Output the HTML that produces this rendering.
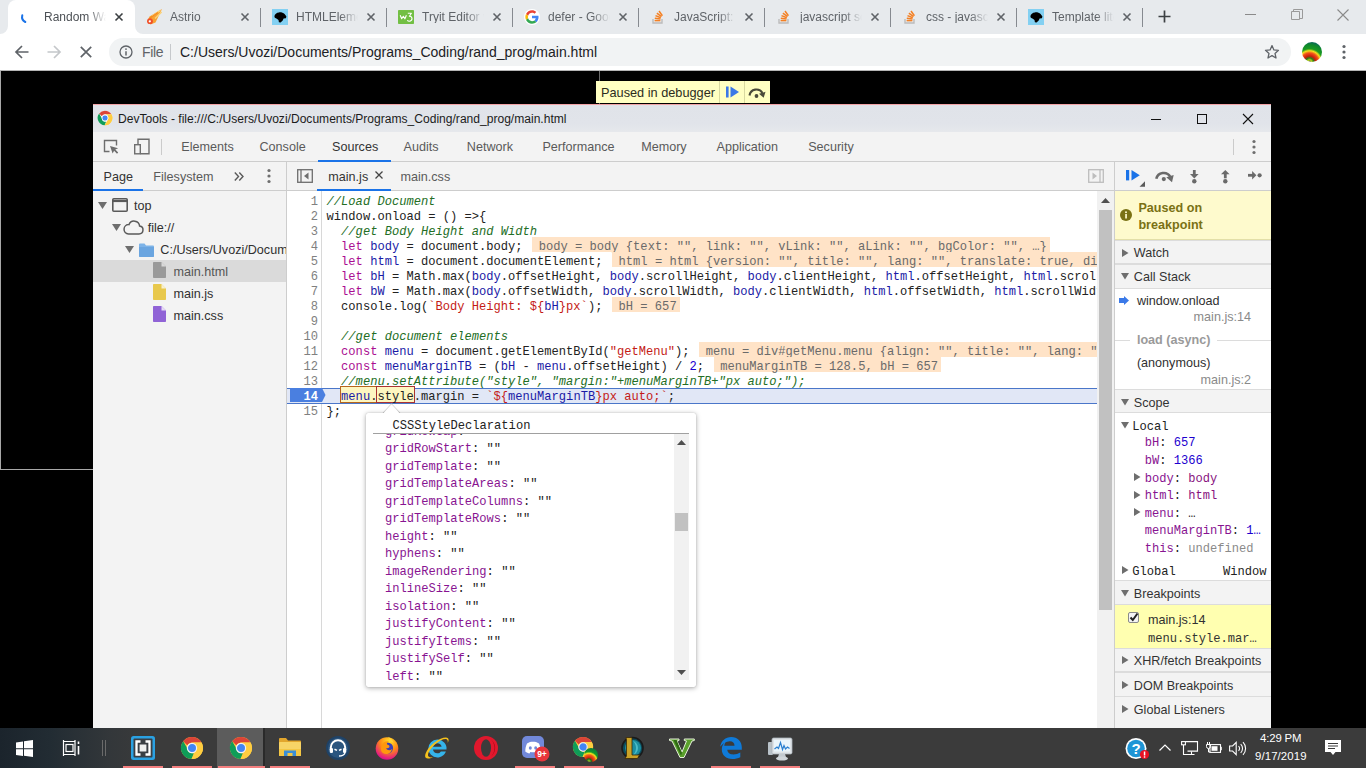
<!DOCTYPE html>
<html>
<head>
<meta charset="utf-8">
<title>Random</title>
<style>
*{box-sizing:border-box;margin:0;padding:0}
html,body{width:1366px;height:768px;overflow:hidden;background:#000}
body{position:relative;font-family:"Liberation Sans",sans-serif;font-size:13px;color:#333}
.abs{position:absolute}
.t{position:absolute;white-space:nowrap;line-height:1}
.mono{font-family:"Liberation Mono",monospace}
svg{position:absolute;overflow:visible}
/* ---------- chrome browser ---------- */
#tabstrip{left:0;top:0;width:1366px;height:34px;background:#e7eaed}
#acttab{left:8px;top:0;width:127px;height:34px;background:#fff;border-radius:8px 8px 0 0}
#toolbar{left:0;top:34px;width:1366px;height:36px;background:#fff}
#tbline{left:0;top:70px;width:1366px;height:1px;background:#b4b4b4}
#omni{left:109px;top:38px;width:1182px;height:28px;border-radius:14px;background:#f1f3f4}
.tabt{font-size:12px;color:#5f6368;top:10.500px;width:64px;overflow:hidden;-webkit-mask-image:linear-gradient(90deg,#000 0,#000 44px,transparent 62px);mask-image:linear-gradient(90deg,#000 0,#000 44px,transparent 62px)}
.tsep{position:absolute;top:8px;width:1px;height:19px;background:#868a90}
/* ---------- page ---------- */
#pagebox{left:0;top:71px;width:600px;height:399px;border:1px solid #a8a8a8;border-top:none;border-right-color:#6a6a6a;background:#000}
/* ---------- devtools ---------- */
#dt{left:93px;top:104px;width:1178px;height:624px;background:#fff;overflow:hidden}
#dttitle{left:0;top:0;width:1178px;height:28px;background:linear-gradient(#e0e3e9 0,#e1e4ea 70%,#e6e8ec 100%);border-top:1px solid #f2a3a7}
#dttabs{left:0;top:28px;width:1178px;height:30px;background:#f3f3f3;border-bottom:1px solid #cdcdcd}
#dtsub{left:0;top:58px;width:1178px;height:29px;background:#f3f3f3;border-bottom:1px solid #cdcdcd}
.dtab{font-size:12.6px;color:#5a5a5a;top:37px}
.tree{font-size:12.6px;color:#303030}
.ln{left:0;width:31px;text-align:right;font-size:12.1px;line-height:15px;color:#808080}
.lnb{color:#fff;font-weight:bold}
.cl{left:39.600px;font-size:12.1px;line-height:15px;color:#222;white-space:pre}
.cl .k{color:#aa0d91}.cl .d{color:#1a1aa6}.cl .v{color:#1a1aa6}.cl .s{color:#c41a16}.cl .c{color:#236e25;font-style:italic}.cl .n{color:#1c00cf}
.cl .a{color:#6a6a6a;background:#ffe3c7;margin-left:9.5px;padding:0 3px 0 6.700px;display:inline-block;height:15px;line-height:20px;vertical-align:top;position:relative;top:-2.500px}
.cl .hl1{background:#fdf6c0;box-shadow:0 0 0 1px #b5651d;display:inline-block;height:15px;line-height:20px;vertical-align:top;position:relative;top:-2.500px}
.cl .hl2{box-shadow:0 0 0 1px #a33;display:inline-block;height:15px;line-height:20px;vertical-align:top}
.pr{left:12px;font-size:12.1px;line-height:15px;color:#222;white-space:pre}
.pn{color:#881391}.pv{color:#222}
.sbb{font-size:12.6px;font-weight:bold;color:#7a7114;line-height:13px}
.sbh{font-size:12.6px;color:#333;line-height:13px}
.sbt{font-size:12.6px;color:#303030;line-height:13px}
.sc{font-size:12.1px;line-height:15px;color:#222;white-space:pre}
.sc .n{color:#1c00cf}.sc .tg{color:#881280}
/* ---------- taskbar ---------- */
#taskbar{left:0;top:728px;width:1366px;height:40px;background:linear-gradient(90deg,#1b242c 0,#222c33 50px,#33373a 110px,#3b3b3b 150px,#3b3b3b 100%)}
</style>
</head>
<body>
<!-- ======= CHROME TAB STRIP ======= -->
<div id="tabstrip" class="abs"></div>
<div id="acttab" class="abs"></div>
<svg style="left:0;top:26px" width="8" height="8"><path d="M0 8h8V0a8 8 0 0 1-8 8z" fill="#fff"/></svg>
<svg style="left:135px;top:26px" width="8" height="8"><path d="M8 8H0V0a8 8 0 0 0 8 8z" fill="#fff"/></svg>
<svg style="left:20px;top:9px" width="16" height="16" viewBox="0 0 16 16"><path d="M2.300 6.200A6 6 0 0 0 5.300 13" fill="none" stroke="#1a73e8" stroke-width="2" stroke-linecap="round"/></svg>
<div class="t tabt" style="left:44px;color:#4d5156">Random Wa</div>
<svg style="left:115px;top:13px" width="8" height="8" viewBox="0 0 8 8"><path d="M0.500 0.500l7 7M7.500 0.500l-7 7" stroke="#3c4043" stroke-width="1.600" fill="none"/></svg>
<svg style="left:145px;top:8px" width="18" height="18" viewBox="0 0 18 18"><path d="M17 1L4.500 8.500 2 13.500l3.500 3 5-2z" fill="#f7a233"/><path d="M15.500 2.300L7 8.200M16.600 4L10 10.500" stroke="#fbd277" stroke-width="1.400"/><path d="M13 4.500L5 10" stroke="#f58a1f" stroke-width="1.200"/><circle cx="5" cy="13.200" r="2.900" fill="#f0502a"/><circle cx="4.800" cy="13.300" r="1.150" fill="#fff"/></svg>
<div class="t tabt" style="left:170px;color:#5f6368">Astrio</div>
<svg style="left:241px;top:13px" width="8" height="8" viewBox="0 0 8 8"><path d="M0.500 0.500l7 7M7.500 0.500l-7 7" stroke="#5f6368" stroke-width="1.600" fill="none"/></svg>
<div class="tsep" style="left:260px"></div>
<svg style="left:272px;top:9px" width="16" height="16" viewBox="0 0 16 16"><rect width="16" height="16" fill="#83d0f2"/><path d="M2.400 7.200C2.800 5 4.600 3.600 7 3.400c2.200-.2 4.200.4 5.600 1.700l1.800 2.300-.5 1.800-2.300.4-.9 2-2.100 1.900-1.700-.3-.4-2.100-2.100-1.500-1.600-.9z" fill="#000"/></svg>
<div class="t tabt" style="left:296px;color:#5f6368">HTMLElemen</div>
<svg style="left:367px;top:13px" width="8" height="8" viewBox="0 0 8 8"><path d="M0.500 0.500l7 7M7.500 0.500l-7 7" stroke="#5f6368" stroke-width="1.600" fill="none"/></svg>
<div class="tsep" style="left:386px"></div>
<svg style="left:398px;top:10px" width="16" height="14" viewBox="0 0 16 14"><rect width="16" height="14" rx="0.800" fill="#72bf44"/><path d="M2.200 5.300l1.500 3.500 1.600-2.500 1.600 2.500 1.500-3.500" fill="none" stroke="#fff" stroke-width="1.100" stroke-linejoin="round"/><path d="M9.800 3.200h3.600l-2 3c1.600 0 2.600.9 2.600 2.400 0 1.600-1.100 2.600-2.600 2.600-1 0-1.700-.4-2.100-1" fill="none" stroke="#fff" stroke-width="1.100" stroke-linejoin="round"/></svg>
<div class="t tabt" style="left:422px;color:#5f6368">Tryit Editor v</div>
<svg style="left:493px;top:13px" width="8" height="8" viewBox="0 0 8 8"><path d="M0.500 0.500l7 7M7.500 0.500l-7 7" stroke="#5f6368" stroke-width="1.600" fill="none"/></svg>
<div class="tsep" style="left:512px"></div>
<svg style="left:524px;top:9px" width="16" height="16" viewBox="0 0 48 48"><circle cx="24" cy="24" r="24" fill="#fff"/><path fill="#EA4335" d="M24 11.5c3.5 0 5.9 1.5 7.300 2.800l5.400-5.300C33.400 5.900 29.100 4 24 4 16.200 4 9.400 8.500 6.100 15l6.300 4.900C14 15 18.600 11.500 24 11.500z"/><path fill="#4285F4" d="M43.600 24.500c0-1.600-.1-2.800-.4-4H24v7.500h11.100c-.2 1.900-1.400 4.700-4.100 6.600l6.200 4.800c3.700-3.400 6.400-8.500 6.400-14.900z"/><path fill="#FBBC05" d="M12.400 28.100c-.4-1.300-.7-2.600-.7-4.100s.3-2.800.7-4.100L6.100 15C4.800 17.700 4 20.800 4 24s.8 6.300 2.100 9l6.300-4.900z"/><path fill="#34A853" d="M24 44c5.400 0 9.900-1.800 13.200-4.800L31 34.400c-1.700 1.200-3.900 2-7 2-5.400 0-10-3.500-11.600-8.400L6.100 33C9.400 39.500 16.200 44 24 44z"/></svg>
<div class="t tabt" style="left:548px;color:#5f6368">defer - Goog</div>
<svg style="left:619px;top:13px" width="8" height="8" viewBox="0 0 8 8"><path d="M0.500 0.500l7 7M7.500 0.500l-7 7" stroke="#5f6368" stroke-width="1.600" fill="none"/></svg>
<div class="tsep" style="left:638px"></div>
<svg style="left:650px;top:9px" width="16" height="16" viewBox="0 0 16 16"><path d="M3 10v4h9v-4" fill="none" stroke="#bcbbbb" stroke-width="1.4"/><g stroke="#f48024" stroke-width="1.5" fill="none"><path d="M4.6 11.6h5.8"/><path d="M4.8 9.2l5.7.9"/><path d="M5.5 6.6l5.3 2.2"/><path d="M6.9 4.1l4.6 3.6"/><path d="M9 2l3.4 4.7"/></g></svg>
<div class="t tabt" style="left:674px;color:#5f6368">JavaScript: s</div>
<svg style="left:745px;top:13px" width="8" height="8" viewBox="0 0 8 8"><path d="M0.500 0.500l7 7M7.500 0.500l-7 7" stroke="#5f6368" stroke-width="1.600" fill="none"/></svg>
<div class="tsep" style="left:764px"></div>
<svg style="left:776px;top:9px" width="16" height="16" viewBox="0 0 16 16"><path d="M3 10v4h9v-4" fill="none" stroke="#bcbbbb" stroke-width="1.4"/><g stroke="#f48024" stroke-width="1.5" fill="none"><path d="M4.6 11.6h5.8"/><path d="M4.8 9.2l5.7.9"/><path d="M5.5 6.6l5.3 2.2"/><path d="M6.9 4.1l4.6 3.6"/><path d="M9 2l3.4 4.7"/></g></svg>
<div class="t tabt" style="left:800px;color:#5f6368">javascript sc</div>
<svg style="left:871px;top:13px" width="8" height="8" viewBox="0 0 8 8"><path d="M0.500 0.500l7 7M7.500 0.500l-7 7" stroke="#5f6368" stroke-width="1.600" fill="none"/></svg>
<div class="tsep" style="left:890px"></div>
<svg style="left:902px;top:9px" width="16" height="16" viewBox="0 0 16 16"><path d="M3 10v4h9v-4" fill="none" stroke="#bcbbbb" stroke-width="1.4"/><g stroke="#f48024" stroke-width="1.5" fill="none"><path d="M4.6 11.6h5.8"/><path d="M4.8 9.2l5.7.9"/><path d="M5.5 6.6l5.3 2.2"/><path d="M6.9 4.1l4.6 3.6"/><path d="M9 2l3.4 4.7"/></g></svg>
<div class="t tabt" style="left:926px;color:#5f6368">css - javascr</div>
<svg style="left:997px;top:13px" width="8" height="8" viewBox="0 0 8 8"><path d="M0.500 0.500l7 7M7.500 0.500l-7 7" stroke="#5f6368" stroke-width="1.600" fill="none"/></svg>
<div class="tsep" style="left:1016px"></div>
<svg style="left:1028px;top:9px" width="16" height="16" viewBox="0 0 16 16"><rect width="16" height="16" fill="#83d0f2"/><path d="M2.400 7.200C2.800 5 4.600 3.600 7 3.400c2.200-.2 4.200.4 5.600 1.700l1.800 2.300-.5 1.800-2.300.4-.9 2-2.100 1.900-1.700-.3-.4-2.100-2.100-1.500-1.600-.9z" fill="#000"/></svg>
<div class="t tabt" style="left:1052px;color:#5f6368">Template lite</div>
<svg style="left:1123px;top:13px" width="8" height="8" viewBox="0 0 8 8"><path d="M0.500 0.500l7 7M7.500 0.500l-7 7" stroke="#5f6368" stroke-width="1.600" fill="none"/></svg>
<div class="tsep" style="left:1142px"></div>
<svg style="left:1158px;top:10px" width="13" height="13" viewBox="0 0 13 13"><path d="M6.500 0.500v12M0.500 6.500h12" stroke="#3c4043" stroke-width="1.700" fill="none"/></svg>
<div class="abs" style="left:1245px;top:14px;width:11px;height:1px;background:#8a8a8a"></div>
<svg style="left:1291px;top:9px" width="12" height="12" viewBox="0 0 12 12"><path d="M0.500 2.500h8v8h-8zM2.500 2.500v-2h9v9h-3" stroke="#9a9a9a" stroke-width="1" fill="none"/></svg>
<svg style="left:1337px;top:9px" width="12" height="12" viewBox="0 0 12 12"><path d="M0.500 0.500l11 11M11.500 0.500l-11 11" stroke="#8a8a8a" stroke-width="1.100" fill="none"/></svg>
<!-- ======= CHROME TOOLBAR ======= -->
<div id="toolbar" class="abs"></div>
<div id="tbline" class="abs"></div>
<div id="omni" class="abs"></div>
<svg style="left:15px;top:45px" width="14" height="14" viewBox="0 0 14 14"><path d="M13.500 7H1.500M7 1L1 7l6 6" stroke="#5f6368" stroke-width="1.700" fill="none"/></svg>
<svg style="left:47px;top:45px" width="14" height="14" viewBox="0 0 14 14"><path d="M0.500 7h12M7 1l6 6-6 6" stroke="#c4c7ca" stroke-width="1.700" fill="none"/></svg>
<svg style="left:80px;top:46px" width="12" height="12" viewBox="0 0 12 12"><path d="M0.800 0.800l10.400 10.400M11.200 0.800L0.800 11.200" stroke="#5f6368" stroke-width="1.700" fill="none"/></svg>
<svg style="left:119px;top:45px" width="14" height="14" viewBox="0 0 14 14"><circle cx="7" cy="7" r="6" fill="none" stroke="#5f6368" stroke-width="1.300"/><path d="M7 6.200v4.200" stroke="#5f6368" stroke-width="1.500"/><circle cx="7" cy="4.100" r="0.900" fill="#5f6368"/></svg>
<div class="t" style="left:142px;top:45px;font-size:14px;color:#5f6368;letter-spacing:-0.3px">File</div>
<div class="abs" style="left:170px;top:44px;width:1px;height:16px;background:#c6c9cc"></div>
<div class="t" style="left:180px;top:45px;font-size:14px;color:#202124">C:/Users/Uvozi/Documents/Programs_Coding/rand_prog/main.html</div>
<svg style="left:1264px;top:44px" width="16" height="16" viewBox="0 0 16 16"><path d="M8 1.600l1.900 4.300 4.600.4-3.500 3.100 1 4.600L8 11.600 4 14l1-4.600L1.500 6.300l4.600-.4z" fill="none" stroke="#5f6368" stroke-width="1.300" stroke-linejoin="round"/></svg>
<svg style="left:1302px;top:42px" width="20" height="20" viewBox="0 0 20 20"><defs><radialGradient id="tdg" cx="38%" cy="100%" r="100%"><stop offset="0" stop-color="#2a2208"/><stop offset=".1" stop-color="#b8d820"/><stop offset=".2" stop-color="#2d7a1a"/><stop offset=".3" stop-color="#c8200c"/><stop offset=".45" stop-color="#f2501a"/><stop offset=".56" stop-color="#f3e11e"/><stop offset=".66" stop-color="#1a9a22"/><stop offset=".85" stop-color="#0f8a2a"/><stop offset="1" stop-color="#0a6a5a"/></radialGradient></defs><circle cx="10" cy="10" r="10" fill="url(#tdg)"/></svg>
<svg style="left:1342px;top:44px" width="4" height="16" viewBox="0 0 4 16"><circle cx="2" cy="2.500" r="1.600" fill="#5f6368"/><circle cx="2" cy="8" r="1.600" fill="#5f6368"/><circle cx="2" cy="13.500" r="1.600" fill="#5f6368"/></svg>
<!-- ======= PAGE ======= -->
<div id="pagebox" class="abs"></div>
<!-- paused in debugger overlay -->
<div class="abs" style="left:596px;top:81px;width:174px;height:22px;background:#ffffc2"></div>
<div class="t" style="left:601px;top:87px;font-size:12.74px;color:#2b2b1c">Paused in debugger</div>
<div class="abs" style="left:719px;top:81px;width:1px;height:22px;background:#d9d9a0"></div>
<div class="abs" style="left:744px;top:81px;width:1px;height:22px;background:#d9d9a0"></div>
<svg style="left:726px;top:86px" width="13" height="12" viewBox="0 0 13 12"><rect x="0" y="0.500" width="2.600" height="11" fill="#3b78e7"/><path d="M4.500 0.500l8.500 5.500-8.500 5.500z" fill="#3b78e7"/></svg>
<svg style="left:748px;top:87px" width="18" height="11" viewBox="0 0 18 11"><path d="M1.500 8.500A7 7 0 0 1 14.500 6" fill="none" stroke="#4a4a3a" stroke-width="2.100"/><path d="M11 6.800l6.500-2-1.800 6z" fill="#4a4a3a"/><circle cx="8.500" cy="9" r="1.900" fill="#4a4a3a"/></svg>
<!-- ======= DEVTOOLS WINDOW (coords relative to 93,104) ======= -->
<div id="dt" class="abs">
  <div id="dttitle" class="abs"></div>
  <!-- chrome logo -->
  <svg style="left:4px;top:6px" width="16" height="16" viewBox="0 0 48 48"><circle cx="24" cy="24" r="22" fill="#fff"/><path d="M24 2a22 22 0 0 1 19.050 11H24a11 11 0 0 0-9.530 5.500L6.400 10.600A22 22 0 0 1 24 2z" fill="#db4437"/><path d="M43.050 13A22 22 0 0 1 23 45.980l9.530-16.480A11 11 0 0 0 33.530 18.500L43.050 13z" fill="#ffcd40" transform="rotate(0 24 24)"/><path d="M6.400 10.600l8.070 13.900h0A11 11 0 0 0 24 35a11 11 0 0 0 3.500-.570L23 45.980A22 22 0 0 1 6.400 10.600z" fill="#0f9d58"/><path d="M43.050 13H24a11 11 0 0 1 9.530 16.500L23 45.980A22 22 0 0 0 43.050 13z" fill="#ffcd40"/><circle cx="24" cy="24" r="9" fill="#4285f4" stroke="#fff" stroke-width="2.200"/></svg>
  <div class="t" style="left:25px;top:9px;font-size:12.07px;color:#1b1b1b">DevTools - file:///C:/Users/Uvozi/Documents/Programs_Coding/rand_prog/main.html</div>
  <!-- window buttons -->
  <div class="abs" style="left:1058px;top:15px;width:10px;height:1px;background:#111"></div>
  <div class="abs" style="left:1104px;top:10px;width:10px;height:10px;border:1px solid #111"></div>
  <svg style="left:1150px;top:10px" width="10" height="10" viewBox="0 0 10 10"><path d="M0 0l10 10M10 0L0 10" stroke="#111" stroke-width="1.100" fill="none"/></svg>

  <div id="dttabs" class="abs"></div>
  <!-- inspect icon -->
  <svg style="left:10px;top:35px" width="16" height="16" viewBox="0 0 16 16"><path d="M6.500 12.500h-5v-11h12v5" fill="none" stroke="#6e6e6e" stroke-width="1.400"/><path d="M7 7l2.600 7.600 1.500-2.800 2.900 2.900 1.200-1.200-2.900-2.900 2.800-1.300z" fill="#6e6e6e"/></svg>
  <!-- device icon -->
  <svg style="left:40px;top:34px" width="17" height="17" viewBox="0 0 17 17"><path d="M5 6V1.200h11v14.600H7.500" fill="none" stroke="#6e6e6e" stroke-width="1.400"/><rect x="1.700" y="6.700" width="5.600" height="9.100" fill="none" stroke="#6e6e6e" stroke-width="1.400"/></svg>
  <div class="abs" style="left:68px;top:35px;width:1px;height:16px;background:#cbcbcb"></div>
  <div class="t dtab" style="left:88.300px">Elements</div>
  <div class="t dtab" style="left:166.500px">Console</div>
  <div class="t dtab" style="left:239px;color:#333">Sources</div>
  <div class="t dtab" style="left:310.600px">Audits</div>
  <div class="t dtab" style="left:373.800px">Network</div>
  <div class="t dtab" style="left:449.400px">Performance</div>
  <div class="t dtab" style="left:548.200px">Memory</div>
  <div class="t dtab" style="left:623.500px">Application</div>
  <div class="t dtab" style="left:715.200px">Security</div>
  <div class="abs" style="left:225px;top:56px;width:73px;height:2px;background:#1a73e8"></div>
  <div class="abs" style="left:1140px;top:35px;width:1px;height:16px;background:#cbcbcb"></div>
  <svg style="left:1159px;top:34.500px" width="4" height="16" viewBox="0 0 4 16"><circle cx="2" cy="2.500" r="1.600" fill="#6e6e6e"/><circle cx="2" cy="8" r="1.600" fill="#6e6e6e"/><circle cx="2" cy="13.500" r="1.600" fill="#6e6e6e"/></svg>

  <div id="dtsub" class="abs"></div>
  <!-- left navigator header -->
  <div class="t dtab" style="left:10.600px;top:67px;color:#333">Page</div>
  <div class="t dtab" style="left:60.300px;top:67px">Filesystem</div>
  <svg style="left:141px;top:68px" width="10" height="9" viewBox="0 0 10 9"><path d="M0.800 0.500l3.700 4-3.700 4M5.300 0.500l3.700 4-3.700 4" fill="none" stroke="#5a5a5a" stroke-width="1.400"/></svg>
  <svg style="left:173.600px;top:64px" width="4" height="16" viewBox="0 0 4 16"><circle cx="2" cy="2.500" r="1.600" fill="#6e6e6e"/><circle cx="2" cy="8" r="1.600" fill="#6e6e6e"/><circle cx="2" cy="13.500" r="1.600" fill="#6e6e6e"/></svg>
  <div class="abs" style="left:0;top:85px;width:50px;height:2px;background:#1a73e8"></div>
  <div class="abs" style="left:193px;top:58px;width:1px;height:566px;background:#cdcdcd"></div>
  <!-- editor tabs -->
  <svg style="left:204px;top:65px" width="16" height="14" viewBox="0 0 16 14"><rect x="0.700" y="0.700" width="14.600" height="12.600" fill="none" stroke="#6e6e6e" stroke-width="1.300"/><path d="M4 0.700v12.600" stroke="#6e6e6e" stroke-width="1.300"/><path d="M11.500 3.500v7L7 7z" fill="#6e6e6e"/></svg>
  <div class="t dtab" style="left:235.300px;top:67px;color:#333">main.js</div>
  <svg style="left:282px;top:67px" width="8" height="8" viewBox="0 0 8 8"><path d="M0.500 0.500l7 7M7.500 0.500l-7 7" stroke="#444" stroke-width="1.300" fill="none"/></svg>
  <div class="t dtab" style="left:307.500px;top:67px">main.css</div>
  <div class="abs" style="left:224px;top:85px;width:74px;height:2px;background:#1a73e8"></div>
  <svg style="left:995px;top:65px" width="16" height="14" viewBox="0 0 16 14"><rect x="0.700" y="0.700" width="14.600" height="12.600" fill="none" stroke="#bdbdbd" stroke-width="1.300"/><path d="M12 0.700v12.600" stroke="#bdbdbd" stroke-width="1.300"/><path d="M4.500 3.500v7L9 7z" fill="#bdbdbd"/></svg>
  <!-- ======= file tree (left pane) ======= -->
  <div class="abs" style="left:0;top:87px;width:193px;height:537px;background:#f3f3f3"></div>
  <div class="abs" style="left:0;top:156px;width:193px;height:22px;background:#dadada"></div>
  <!-- top -->
  <svg style="left:5px;top:98px" width="9" height="7" viewBox="0 0 9 7"><path d="M0 0h9L4.500 7z" fill="#6e6e6e"/></svg>
  <svg style="left:19px;top:94px" width="16" height="14" viewBox="0 0 16 14"><rect x="0.800" y="0.800" width="14.400" height="12.400" rx="1" fill="none" stroke="#5a5a5a" stroke-width="1.600"/><path d="M0.800 3h14.400" stroke="#5a5a5a" stroke-width="2.200"/></svg>
  <div class="t tree" style="left:40.900px;top:96px">top</div>
  <!-- file:// -->
  <svg style="left:18.500px;top:120px" width="9" height="7" viewBox="0 0 9 7"><path d="M0 0h9L4.500 7z" fill="#6e6e6e"/></svg>
  <svg style="left:30px;top:116px" width="21" height="15" viewBox="0 0 21 15"><path d="M5.500 14h10.500a4 4 0 0 0 .6-7.950A5.500 5.500 0 0 0 6 4.600 4.700 4.700 0 0 0 5.500 14z" fill="none" stroke="#5a5a5a" stroke-width="1.500"/></svg>
  <div class="t tree" style="left:54.700px;top:118px">file://</div>
  <!-- folder -->
  <svg style="left:31.500px;top:142px" width="9" height="7" viewBox="0 0 9 7"><path d="M0 0h9L4.500 7z" fill="#6e6e6e"/></svg>
  <svg style="left:46px;top:139px" width="15" height="14" viewBox="0 0 15 14"><path d="M0 1.500a1 1 0 0 1 1-1h4.500l1.500 2h7a1 1 0 0 1 1 1V13a1 1 0 0 1-1 1H1a1 1 0 0 1-1-1z" fill="#7db3e8"/><path d="M0 4h15v9a1 1 0 0 1-1 1H1a1 1 0 0 1-1-1z" fill="#6aa5e0"/></svg>
  <div class="t tree" style="left:67.300px;top:140px;width:126px;overflow:hidden">C:/Users/Uvozi/Documents/Programs_Coding</div>
  <!-- files -->
  <svg style="left:60px;top:158px" width="13" height="16" viewBox="0 0 13 16"><path d="M0 0.800A.8.800 0 0 1 .8 0h7.700L13 4.500v10.700a.8.800 0 0 1-.8.800H.8a.8.800 0 0 1-.8-.8z" fill="#9a9a9a"/><path d="M8.500 0v4.500H13z" fill="#dadada"/></svg>
  <div class="t tree" style="left:80.500px;top:162px;color:#555">main.html</div>
  <svg style="left:60px;top:180px" width="13" height="16" viewBox="0 0 13 16"><path d="M0 0.800A.8.800 0 0 1 .8 0h7.700L13 4.500v10.700a.8.800 0 0 1-.8.800H.8a.8.800 0 0 1-.8-.8z" fill="#e8c84c"/><path d="M8.500 0v4.500H13z" fill="#f7f0d0"/></svg>
  <div class="t tree" style="left:80.500px;top:184px">main.js</div>
  <svg style="left:60px;top:202px" width="13" height="16" viewBox="0 0 13 16"><path d="M0 0.800A.8.800 0 0 1 .8 0h7.700L13 4.500v10.700a.8.800 0 0 1-.8.800H.8a.8.800 0 0 1-.8-.8z" fill="#9063d6"/><path d="M8.500 0v4.500H13z" fill="#e6dcf6"/></svg>
  <div class="t tree" style="left:80.500px;top:206px">main.css</div>
  <!-- ======= code editor ======= -->
  <div class="abs" style="left:194px;top:87px;width:810px;height:537px;background:#fff;overflow:hidden">
    <div class="abs" style="left:0;top:0;width:35px;height:537px;background:#fff;border-right:1px solid #d8d8d8"></div>
    <div class="abs" style="left:0;top:196.500px;width:810px;height:16px;background:#e1e7f6;border-top:1px solid #4a76c9;border-bottom:1px solid #4a76c9"></div>
    <div class="abs" style="left:3px;top:197px;width:32px;height:14px;background:#4a7fe0"></div>
    <svg style="left:35px;top:197px" width="4" height="14" viewBox="0 0 4 14"><path d="M0 0l3.500 7L0 14z" fill="#4a7fe0"/></svg>
    <div class="t mono ln" style="top:3.5px">1</div>
    <div class="t mono cl" style="top:3.5px"><span class="c">//Load Document</span></div>
    <div class="t mono ln" style="top:18.5px">2</div>
    <div class="t mono cl" style="top:18.5px">window.onload = () =&gt;{</div>
    <div class="t mono ln" style="top:33.5px">3</div>
    <div class="t mono cl" style="top:33.5px">  <span class="c">//get Body Height and Width</span></div>
    <div class="t mono ln" style="top:48.5px">4</div>
    <div class="t mono cl" style="top:48.5px">  <span class="k">let</span> <span class="d">body</span> = document.body;<span class="a">body = body {text: &quot;&quot;, link: &quot;&quot;, vLink: &quot;&quot;, aLink: &quot;&quot;, bgColor: &quot;&quot;, …}</span></div>
    <div class="t mono ln" style="top:63.5px">5</div>
    <div class="t mono cl" style="top:63.5px">  <span class="k">let</span> <span class="d">html</span> = document.documentElement;<span class="a">html = html {version: &quot;&quot;, title: &quot;&quot;, lang: &quot;&quot;, translate: true, dir: &quot;&quot;, …}</span></div>
    <div class="t mono ln" style="top:78.5px">6</div>
    <div class="t mono cl" style="top:78.5px">  <span class="k">let</span> <span class="d">bH</span> = Math.max(<span class="v">body</span>.offsetHeight, <span class="v">body</span>.scrollHeight, <span class="v">body</span>.clientHeight, <span class="v">html</span>.offsetHeight, <span class="v">html</span>.scrollHeight);</div>
    <div class="t mono ln" style="top:93.5px">7</div>
    <div class="t mono cl" style="top:93.5px">  <span class="k">let</span> <span class="d">bW</span> = Math.max(<span class="v">body</span>.offsetWidth, <span class="v">body</span>.scrollWidth, <span class="v">body</span>.clientWidth, <span class="v">html</span>.offsetWidth, <span class="v">html</span>.scrollWidth);</div>
    <div class="t mono ln" style="top:108.5px">8</div>
    <div class="t mono cl" style="top:108.5px">  console.log(<span class="s">`Body Height: ${</span><span class="v">bH</span><span class="s">}px`</span>);<span class="a">bH = 657</span></div>
    <div class="t mono ln" style="top:123.5px">9</div>
    <div class="t mono ln" style="top:138.5px">10</div>
    <div class="t mono cl" style="top:138.5px">  <span class="c">//get document elements</span></div>
    <div class="t mono ln" style="top:153.5px">11</div>
    <div class="t mono cl" style="top:153.5px">  <span class="k">const</span> <span class="d">menu</span> = document.getElementById(<span class="s">&quot;getMenu&quot;</span>);<span class="a">menu = div#getMenu.menu {align: &quot;&quot;, title: &quot;&quot;, lang: &quot;&quot;, translate: true, …}</span></div>
    <div class="t mono ln" style="top:168.5px">12</div>
    <div class="t mono cl" style="top:168.5px">  <span class="k">const</span> <span class="d">menuMarginTB</span> = (<span class="v">bH</span> - <span class="v">menu</span>.offsetHeight) / <span class="n">2</span>;<span class="a">menuMarginTB = 128.5, bH = 657</span></div>
    <div class="t mono ln" style="top:183.5px">13</div>
    <div class="t mono cl" style="top:183.5px">  <span class="c">//menu.setAttribute(&quot;style&quot;, &quot;margin:&quot;+menuMarginTB+&quot;px auto;&quot;);</span></div>
    <div class="t mono ln lnb" style="top:198.5px">14</div>
    <div class="t mono cl" style="top:198.5px">  <span class="hl1"><span class="v">menu</span>.<span class="hl2">style</span></span>.margin = <span class="s">`${</span><span class="v">menuMarginTB</span><span class="s">}px auto;`</span>;</div>
    <div class="t mono ln" style="top:213.5px">15</div>
    <div class="t mono cl" style="top:213.5px">};</div>
  </div>
  <!-- ======= object popover ======= -->
  <svg style="left:289px;top:299px" width="20" height="11" viewBox="0 0 20 11"><path d="M0 11L9.500 0.800 19 11z" fill="#fff" stroke="#d0d0d0" stroke-width="1"/></svg>
  <div class="abs" style="left:273px;top:309px;width:330px;height:274px;background:#fff;border-radius:2px;box-shadow:0 1px 5px rgba(0,0,0,.35),0 0 1px rgba(0,0,0,.25)">
    <svg style="left:17px;top:-9px" width="18" height="10" viewBox="0 0 18 10"><path d="M0 10L8.500 0.800 17 10z" fill="#fff"/></svg>
    <div class="t mono" style="left:26.500px;top:6px;font-size:12.1px;line-height:15px;color:#222">CSSStyleDeclaration</div>
    <div class="abs" style="left:7px;top:20px;width:316px;height:247px;border-top:1px solid #a0a0a0;overflow:hidden">
      <div class="abs" style="left:301px;top:0;width:15px;height:247px;background:#f1f1f1"></div>
      <svg style="left:304px;top:6px" width="9" height="5" viewBox="0 0 9 5"><path d="M0 5h9L4.500 0z" fill="#505050"/></svg>
      <svg style="left:304px;top:236px" width="9" height="5" viewBox="0 0 9 5"><path d="M0 0h9L4.500 5z" fill="#505050"/></svg>
      <div class="abs" style="left:302px;top:79px;width:13px;height:18px;background:#c1c1c1"></div>
      <div class="t mono pr" style="top:-9.5px"><span class="pn">gridRowGap</span>: <span class="pv">""</span></div>
      <div class="t mono pr" style="top:8.0px"><span class="pn">gridRowStart</span>: <span class="pv">""</span></div>
      <div class="t mono pr" style="top:25.5px"><span class="pn">gridTemplate</span>: <span class="pv">""</span></div>
      <div class="t mono pr" style="top:43.0px"><span class="pn">gridTemplateAreas</span>: <span class="pv">""</span></div>
      <div class="t mono pr" style="top:60.5px"><span class="pn">gridTemplateColumns</span>: <span class="pv">""</span></div>
      <div class="t mono pr" style="top:78.0px"><span class="pn">gridTemplateRows</span>: <span class="pv">""</span></div>
      <div class="t mono pr" style="top:95.5px"><span class="pn">height</span>: <span class="pv">""</span></div>
      <div class="t mono pr" style="top:113.0px"><span class="pn">hyphens</span>: <span class="pv">""</span></div>
      <div class="t mono pr" style="top:130.5px"><span class="pn">imageRendering</span>: <span class="pv">""</span></div>
      <div class="t mono pr" style="top:148.0px"><span class="pn">inlineSize</span>: <span class="pv">""</span></div>
      <div class="t mono pr" style="top:165.5px"><span class="pn">isolation</span>: <span class="pv">""</span></div>
      <div class="t mono pr" style="top:183.0px"><span class="pn">justifyContent</span>: <span class="pv">""</span></div>
      <div class="t mono pr" style="top:200.5px"><span class="pn">justifyItems</span>: <span class="pv">""</span></div>
      <div class="t mono pr" style="top:218.0px"><span class="pn">justifySelf</span>: <span class="pv">""</span></div>
      <div class="t mono pr" style="top:235.5px"><span class="pn">left</span>: <span class="pv">""</span></div>
      <div class="t mono pr" style="top:253.0px"><span class="pn">letterSpacing</span>: <span class="pv">""</span></div>
    </div>
  </div>
  <!-- ======= editor scrollbar ======= -->
  <div class="abs" style="left:1004px;top:87px;width:17px;height:537px;background:#f1f1f1"></div>
  <svg style="left:1008px;top:94px" width="9" height="5" viewBox="0 0 9 5"><path d="M0 5h9L4.500 0z" fill="#505050"/></svg>
  <div class="abs" style="left:1006px;top:106px;width:13px;height:400px;background:#c1c1c1"></div>
  <!-- ======= debugger sidebar ======= -->
  <div class="abs" style="left:1021px;top:58px;width:1px;height:566px;background:#cdcdcd"></div>
  <div class="abs" style="left:1022px;top:87px;width:156px;height:537px;background:#fff"></div>
  <svg style="left:1033px;top:66.4px" width="20" height="17" viewBox="0 0 20 17"><rect x="0" y="0" width="3.200" height="10.400" fill="#1a73e8"/><path d="M5.500 0l8.300 5.200-8.300 5.200z" fill="#1a73e8"/><path d="M19 11.300v5.500h-5.500z" fill="#5a5a5a"/></svg>
  <svg style="left:1062px;top:65.5px" width="20" height="13" viewBox="0 0 20 13"><path d="M1.300 8.800A7.600 7.600 0 0 1 15.300 6.800" fill="none" stroke="#6a6a6a" stroke-width="2.600"/><path d="M11.300 7.200l7.400-2.200-1.700 7.200z" fill="#6a6a6a"/><circle cx="8.800" cy="9.100" r="2.100" fill="#6a6a6a"/></svg>
  <svg style="left:1097.1px;top:65.6px" width="8.600" height="14" viewBox="0 0 8.600 14"><rect x="2.900" y="0" width="2.800" height="5" fill="#6a6a6a"/><path d="M0 4.100h8.600L4.300 8.400z" fill="#6a6a6a"/><circle cx="4.300" cy="11.300" r="2.200" fill="#6a6a6a"/></svg>
  <svg style="left:1127.7px;top:65.6px" width="8.600" height="14" viewBox="0 0 8.600 14"><rect x="2.900" y="3.500" width="2.800" height="4.800" fill="#6a6a6a"/><path d="M0 4.300h8.600L4.300 0z" fill="#6a6a6a"/><circle cx="4.300" cy="11.300" r="2.200" fill="#6a6a6a"/></svg>
  <svg style="left:1155px;top:67.2px" width="14" height="8.600" viewBox="0 0 14 8.600"><rect x="0" y="2.900" width="5" height="2.800" fill="#6a6a6a"/><path d="M4.100 0v8.600L8.400 4.300z" fill="#6a6a6a"/><circle cx="11.600" cy="4.300" r="2.100" fill="#6a6a6a"/></svg>
  <div class="abs" style="left:1022px;top:87px;width:156px;height:49px;background:#fefacd;border-bottom:1px solid #e3dfa8"></div>
  <svg style="left:1027px;top:104.5px" width="12" height="12" viewBox="0 0 12 12"><circle cx="6" cy="6" r="6" fill="#7a7114"/><rect x="5.200" y="5" width="1.700" height="4.500" fill="#fefacd"/><circle cx="6" cy="3.200" r="1" fill="#fefacd"/></svg>
  <div class="t sbb" style="left:1045.4px;top:98.0px">Paused on</div>
  <div class="t sbb" style="left:1045.4px;top:114.5px">breakpoint</div>
  <div class="abs" style="left:1022px;top:136px;width:156px;height:24px;background:#f3f3f3;border-top:1px solid #dcdcdc;border-bottom:1px solid #dcdcdc"></div>
  <svg style="left:1028.5px;top:144.5px" width="7" height="8" viewBox="0 0 7 8"><path d="M0 0v8L6.500 4z" fill="#6e6e6e"/></svg>
  <div class="t sbh" style="left:1040.8px;top:143.0px">Watch</div>
  <div class="abs" style="left:1022px;top:160px;width:156px;height:25px;background:#f3f3f3;border-top:1px solid #dcdcdc;border-bottom:1px solid #dcdcdc"></div>
  <svg style="left:1027.5px;top:169.1px" width="8" height="7" viewBox="0 0 8 7"><path d="M0 0h8L4 6.500z" fill="#6e6e6e"/></svg>
  <div class="t sbh" style="left:1040.8px;top:167.1px">Call Stack</div>
  <svg style="left:1026px;top:192px" width="10" height="9" viewBox="0 0 10 9"><path d="M0 2h5V0l5 4.500L5 9V7H0z" fill="#3a79e8"/></svg>
  <div class="t sbt" style="left:1043.9px;top:191.0px">window.onload</div>
  <div class="t sbt" style="right:20px;top:207.0px;color:#8a8a8a">main.js:14</div>
  <div class="abs" style="left:1022px;top:236px;width:15px;height:1px;background:#dcdcdc"></div>
  <div class="abs" style="left:1124px;top:236px;width:54px;height:1px;background:#dcdcdc"></div>
  <div class="t sbt" style="left:1043.9px;top:230.0px;color:#9a9a9a;font-weight:bold">load (async)</div>
  <div class="t sbt" style="left:1043.9px;top:253.0px">(anonymous)</div>
  <div class="t sbt" style="right:20px;top:269.5px;color:#8a8a8a">main.js:2</div>
  <div class="abs" style="left:1022px;top:285px;width:156px;height:24px;background:#f3f3f3;border-top:1px solid #dcdcdc;border-bottom:1px solid #dcdcdc"></div>
  <svg style="left:1027.5px;top:295.0px" width="8" height="7" viewBox="0 0 8 7"><path d="M0 0h8L4 6.500z" fill="#6e6e6e"/></svg>
  <div class="t sbh" style="left:1040.8px;top:293.0px">Scope</div>
  <svg style="left:1027.5px;top:317.8px" width="8" height="7" viewBox="0 0 8 7"><path d="M0 0h8L4 6.500z" fill="#6e6e6e"/></svg>
  <div class="t mono sc" style="left:1039.2px;top:315.8px">Local</div>
  <div class="t mono sc" style="left:1051.7px;top:332.4px"><span class="pn">bH</span>: <span class="n">657</span></div>
  <div class="t mono sc" style="left:1051.7px;top:350.0px"><span class="pn">bW</span>: <span class="n">1366</span></div>
  <svg style="left:1041px;top:369.1px" width="7" height="8" viewBox="0 0 7 8"><path d="M0 0v8L6.500 4z" fill="#6e6e6e"/></svg>
  <div class="t mono sc" style="left:1051.7px;top:367.6px"><span class="pn">body</span>: <span class="tg">body</span></div>
  <svg style="left:1041px;top:386.7px" width="7" height="8" viewBox="0 0 7 8"><path d="M0 0v8L6.500 4z" fill="#6e6e6e"/></svg>
  <div class="t mono sc" style="left:1051.7px;top:385.2px"><span class="pn">html</span>: <span class="tg">html</span></div>
  <svg style="left:1041px;top:404.3px" width="7" height="8" viewBox="0 0 7 8"><path d="M0 0v8L6.500 4z" fill="#6e6e6e"/></svg>
  <div class="t mono sc" style="left:1051.7px;top:402.8px"><span class="pn">menu</span>: …</div>
  <div class="t mono sc" style="left:1051.7px;top:420.4px"><span class="pn">menuMarginTB</span>: <span class="n">1…</span></div>
  <div class="t mono sc" style="left:1051.7px;top:438.0px"><span class="pn">this</span>: <span style="color:#8a8a8a">undefined</span></div>
  <svg style="left:1028.5px;top:462px" width="7" height="8" viewBox="0 0 7 8"><path d="M0 0v8L6.500 4z" fill="#6e6e6e"/></svg>
  <div class="t mono sc" style="left:1039.2px;top:460.5px">Global</div>
  <div class="t mono sc" style="right:4.400000000000091px;top:460.5px">Window</div>
  <div class="abs" style="left:1022px;top:476px;width:156px;height:25px;background:#f3f3f3;border-top:1px solid #dcdcdc;border-bottom:1px solid #dcdcdc"></div>
  <svg style="left:1027.5px;top:486.2px" width="8" height="7" viewBox="0 0 8 7"><path d="M0 0h8L4 6.500z" fill="#6e6e6e"/></svg>
  <div class="t sbh" style="left:1040.8px;top:484.2px">Breakpoints</div>
  <div class="abs" style="left:1022px;top:501px;width:156px;height:43px;background:#ffffb0"></div>
  <div class="abs" style="left:1034.5px;top:508px;width:11px;height:11px;background:#f4f4f4;border:1px solid #8a8a8a;border-radius:2px"></div>
  <svg style="left:1036px;top:508px" width="10" height="10" viewBox="0 0 10 10"><path d="M1.500 5.500l2.300 2.500L8.500 1.500" fill="none" stroke="#222" stroke-width="2"/></svg>
  <div class="t sbt" style="left:1055px;top:510.0px">main.js:14</div>
  <div class="t mono sc" style="left:1055px;top:528.0px;color:#333">menu.style.mar…</div>
  <div class="abs" style="left:1022px;top:544px;width:156px;height:24px;background:#f3f3f3;border-top:1px solid #dcdcdc;border-bottom:1px solid #dcdcdc"></div>
  <svg style="left:1028.5px;top:552.2px" width="7" height="8" viewBox="0 0 7 8"><path d="M0 0v8L6.500 4z" fill="#6e6e6e"/></svg>
  <div class="t sbh" style="left:1040.8px;top:550.7px">XHR/fetch Breakpoints</div>
  <div class="abs" style="left:1022px;top:568px;width:156px;height:25px;background:#f3f3f3;border-top:1px solid #dcdcdc;border-bottom:1px solid #dcdcdc"></div>
  <svg style="left:1028.5px;top:577.2px" width="7" height="8" viewBox="0 0 7 8"><path d="M0 0v8L6.500 4z" fill="#6e6e6e"/></svg>
  <div class="t sbh" style="left:1040.8px;top:575.7px">DOM Breakpoints</div>
  <div class="abs" style="left:1022px;top:592px;width:156px;height:25px;background:#f3f3f3;border-top:1px solid #dcdcdc;border-bottom:1px solid #dcdcdc"></div>
  <svg style="left:1028.5px;top:601.2px" width="7" height="8" viewBox="0 0 7 8"><path d="M0 0v8L6.500 4z" fill="#6e6e6e"/></svg>
  <div class="t sbh" style="left:1040.8px;top:599.7px">Global Listeners</div>
  <div class="abs" style="left:1022px;top:616px;width:156px;height:8px;background:#f3f3f3"></div>
</div>
<!-- ======= TASKBAR ======= -->
<div id="taskbar" class="abs"></div>
<div class="abs" style="left:217px;top:728px;width:46px;height:40px;background:#5c5c5c"></div>
<div class="abs" style="left:263px;top:728px;width:2px;height:40px;background:#2a2a2a"></div>
<svg style="left:16px;top:740px" width="17" height="17" viewBox="0 0 17 17"><path d="M0 2.400l7-1v6.800H0zM8 1.250L17 0v8.200H8zM0 9.200h7V16l-7-1zM8 9.200h9V17l-9-1.250z" fill="#fff"/></svg>
<svg style="left:63px;top:740px" width="17" height="16" viewBox="0 0 17 16"><path d="M0.500 0v16M0.500 1.500h11.500M0.500 14.500h11.500M12 0v16" stroke="#fff" stroke-width="1.200" fill="none"/><rect x="3" y="4.500" width="7" height="7" fill="none" stroke="#fff" stroke-width="1.200"/><path d="M15.500 1.500v2.500M15.500 6v8.500" stroke="#fff" stroke-width="1.600"/></svg>
<div class="abs" style="left:102px;top:740px;width:1px;height:16px;background:#6a6a6a"></div>
<div class="abs" style="left:105px;top:740px;width:1px;height:16px;background:#6a6a6a"></div>
<svg style="left:131px;top:736px" width="24" height="24" viewBox="0 0 24 24"><rect width="24" height="24" rx="2.500" fill="#2aa1e2"/><rect x="2.500" y="2.500" width="19" height="19" rx="1" fill="#3a3f44"/><path d="M9.500 5.500h-4v13h4M14.500 5.500h4v13h-4" fill="none" stroke="#fff" stroke-width="2.300"/><rect x="8.600" y="8.500" width="6.800" height="7" fill="#fff" opacity=".92"/></svg>
<svg style="left:179.5px;top:736px" width="24" height="24" viewBox="0 0 48 48"><circle cx="24" cy="24" r="22" fill="#ffcd40"/><path d="M24 2a22 22 0 0 1 19.050 11H24a11 11 0 0 0-9.530 5.500L6.400 10.600A22 22 0 0 1 24 2z" fill="#db4437"/><path d="M6.400 10.600l8.070 13.900A11 11 0 0 0 27.500 34.430L23 45.980A22 22 0 0 1 6.400 10.600z" fill="#0f9d58"/><path d="M43.050 13H24a11 11 0 0 1 9.530 16.500L23 45.980A22 22 0 0 0 43.050 13z" fill="#ffcd40"/><circle cx="24" cy="24" r="9.200" fill="#4285f4" stroke="#f1f1f1" stroke-width="2.400"/></svg>
<svg style="left:228.5px;top:736px" width="24" height="24" viewBox="0 0 48 48"><circle cx="24" cy="24" r="22" fill="#ffcd40"/><path d="M24 2a22 22 0 0 1 19.050 11H24a11 11 0 0 0-9.530 5.500L6.400 10.600A22 22 0 0 1 24 2z" fill="#db4437"/><path d="M6.400 10.600l8.070 13.900A11 11 0 0 0 27.500 34.430L23 45.980A22 22 0 0 1 6.400 10.600z" fill="#0f9d58"/><path d="M43.050 13H24a11 11 0 0 1 9.530 16.500L23 45.980A22 22 0 0 0 43.050 13z" fill="#ffcd40"/><circle cx="24" cy="24" r="9.200" fill="#4285f4" stroke="#f1f1f1" stroke-width="2.400"/></svg>
<svg style="left:278px;top:737px" width="24" height="22" viewBox="0 0 24 22"><path d="M1 2a1 1 0 0 1 1-1h6l2 2.500h12a1 1 0 0 1 1 1V6H1z" fill="#e2a62c"/><rect x="1" y="5" width="22" height="14" rx="0.800" fill="#f7d466"/><path d="M1 12h22v6.200a.8.800 0 0 1-.8.800H1.800a.8.800 0 0 1-.8-.8z" fill="#f4c743"/><path d="M6 19v-5.500h12V19h-3.500v-3h-5v3z" fill="#3b8fd6"/></svg>
<svg style="left:326px;top:736px" width="24" height="24" viewBox="0 0 24 24"><circle cx="12" cy="12" r="12" fill="#1f4266"/><circle cx="12" cy="12" r="10" fill="#2a557f"/><path d="M4.800 14.500v-3a7.200 7.200 0 0 1 14.400 0v3" fill="none" stroke="#fff" stroke-width="2"/><rect x="3.800" y="12" width="3.200" height="5" rx="1.200" fill="#fff"/><rect x="17" y="12" width="3.200" height="5" rx="1.200" fill="#fff"/><path d="M8.500 13.200l2.500 1.200M15.500 13.200L13 14.400" stroke="#fff" stroke-width="1.500"/><path d="M19 17c-1 2.200-3.500 3-6 3" fill="none" stroke="#fff" stroke-width="1.300"/></svg>
<svg style="left:375px;top:736px" width="24" height="24" viewBox="0 0 24 24"><defs><radialGradient id="ffg" cx="60%" cy="20%" r="90%"><stop offset="0" stop-color="#ffe226"/><stop offset=".45" stop-color="#ff8a16"/><stop offset=".85" stop-color="#e31587"/><stop offset="1" stop-color="#b5127a"/></radialGradient></defs><circle cx="12" cy="12.500" r="11.300" fill="url(#ffg)"/><path d="M14 1c2 1.500 2.500 4 2 5.500 2 .5 3.500 3 3 6-.5 3.500-3.500 6-7 6-3.500 0-6-2.500-6-5.500 0-1.500.5-2.500 1.500-3.500C7 7 8 5 10.500 4.500 12 4 13.500 2.500 14 1z" fill="#ffbd4f" opacity=".0"/><circle cx="12.500" cy="12" r="5.600" fill="#3a3fb8"/><path d="M7 9c1-3 4-4.500 7-3.500-1.500.5-2.300 1.700-2 3 1.500.2 2.500 1 2.500 2 0 1.500-2 2-3.500 1.500 1 2.500 4 3 6 1-.5 3-3 5-6 5-4 0-6.500-4-4-9z" fill="#ff980e"/><path d="M13 .800c3 1.500 5 3.500 5.500 6.500-1-1.200-2.300-1.800-3.700-1.800C14.500 3.500 14 2 13 .8z" fill="#ffd43a"/></svg>
<svg style="left:424px;top:736px" width="26" height="24" viewBox="0 0 26 24"><path d="M22.500 13.500H9c.2 2.200 2 3.800 4.300 3.800 1.600 0 2.800-.7 3.600-1.900h5c-1.300 3.600-4.600 6-8.600 6A9 9 0 0 1 4.300 12.500a9 9 0 0 1 9-9 9 9 0 0 1 9.200 10zM9.100 10.700h8.500c-.3-2-2-3.400-4.200-3.400-2.200 0-3.900 1.400-4.300 3.400z" fill="#35b4ea"/><path d="M1.500 21.500c-1.500-3 2-9.500 9-15C16 2.300 22 .5 24 2.200c1 1 .7 2.800-.3 4.800.3-1.800 0-3-.8-3.600-2-1.300-7 .8-11.400 4.700-5.400 4.800-8.800 10.200-7 12.500.8 1 2.500 1 4.500.3-3 1.700-6 2.200-7.500.6z" fill="#f6c21c"/></svg>
<svg style="left:473.500px;top:736px" width="24" height="24" viewBox="0 0 24 24"><circle cx="12" cy="12" r="12" fill="#e0182d"/><ellipse cx="12" cy="12" rx="5" ry="8.700" fill="#3b3b3b"/><path d="M17 3.500A10.800 10.800 0 0 1 17 20.500a12 12 0 0 0 0-17z" fill="#a70014"/></svg>
<svg style="left:522px;top:736px" width="28" height="26" viewBox="0 0 28 26"><rect x="0" y="0" width="22" height="22" rx="5" fill="#7289da"/><path d="M5 7.500c2-1.500 4-1.800 6-1.800s4 .3 6 1.800c1.200 2.500 1.700 5 1.700 8-1.300 1.200-2.800 1.700-4.200 1.900l-.9-1.500c-1.700.5-3.500.5-5.200 0l-.9 1.500C6.100 17.200 4.600 16.700 3.300 15.500 3.300 12.500 3.800 10 5 7.500z" fill="#fff"/><ellipse cx="8.300" cy="12" rx="1.500" ry="1.800" fill="#7289da"/><ellipse cx="13.700" cy="12" rx="1.500" ry="1.800" fill="#7289da"/><circle cx="20" cy="18" r="7.500" fill="#e8353b"/><text x="20" y="21" text-anchor="middle" font-family="Liberation Sans" font-weight="bold" font-size="8.500" fill="#fff">9+</text></svg>
<svg style="left:572px;top:736px" width="22" height="22" viewBox="0 0 48 48"><circle cx="24" cy="24" r="22" fill="#ffcd40"/><path d="M24 2a22 22 0 0 1 19.050 11H24a11 11 0 0 0-9.530 5.500L6.400 10.600A22 22 0 0 1 24 2z" fill="#db4437"/><path d="M6.400 10.600l8.070 13.900A11 11 0 0 0 27.500 34.430L23 45.980A22 22 0 0 1 6.400 10.600z" fill="#0f9d58"/><path d="M43.050 13H24a11 11 0 0 1 9.530 16.500L23 45.980A22 22 0 0 0 43.050 13z" fill="#ffcd40"/><circle cx="24" cy="24" r="9.200" fill="#4285f4" stroke="#f1f1f1" stroke-width="2.400"/></svg>
<svg style="left:584px;top:748px" width="14" height="14" viewBox="0 0 14 14"><defs><radialGradient id="tdg2" cx="35%" cy="95%" r="95%"><stop offset="0" stop-color="#b8d820"/><stop offset=".18" stop-color="#1b6b1b"/><stop offset=".3" stop-color="#d6280f"/><stop offset=".48" stop-color="#f2601a"/><stop offset=".6" stop-color="#f3e11e"/><stop offset=".72" stop-color="#129a2a"/><stop offset="1" stop-color="#0b7a3a"/></radialGradient></defs><circle cx="7" cy="7" r="7" fill="url(#tdg2)"/></svg>
<svg style="left:620px;top:736px" width="24" height="24" viewBox="0 0 24 24"><circle cx="12.500" cy="12" r="10.500" fill="#0d4a5a" stroke="#1a1a1a" stroke-width="1.600"/><circle cx="13" cy="12" r="8" fill="#1c8fa0"/><path d="M13 5c3 1 5 4 5 7s-2 6-5 7c2-2 3-4.500 3-7s-1-5-3-7z" fill="#5fd0d8" opacity=".7"/><path d="M6 1.500h6v17.500h7.500l-2 3.500H5l1.500-2.500V4z" fill="#c9a227" stroke="#3a2a08" stroke-width=".8"/></svg>
<svg style="left:669px;top:738px" width="26" height="20" viewBox="0 0 26 20"><path d="M0.500 1h9.500v1.500l-2 .5 5 11 4.500-11-2.200-.5V1h10v1.500l-2.300.5L15 19.500h-4L3 3 0.500 2.500z" fill="#5aa02c" stroke="#e6f0da" stroke-width="1"/><path d="M4.500 2h3l5.500 13-1 2.500z" fill="#2f6b14"/></svg>
<svg style="left:719px;top:736px" width="24" height="24" viewBox="0 0 24 24"><path d="M1.200 10.800C2 4.800 6.500 1 12.300 1c6.300 0 10.500 4.300 10.500 10.300v2.500H8.300c.2 3 2.600 4.700 6 4.700 2.600 0 5-.7 7-2v4.700c-2.200 1.200-5 1.800-8 1.800-6.300 0-10.500-3.700-10.500-9.700 0-3.300 1.600-6.200 4.700-8-1.300 1.200-2 2.800-2.200 4.500h10.200c0-2.800-1.700-4.500-4.700-4.500-3.800 0-7 2.300-9.600 5.500z" fill="#0f7ad8"/></svg>
<svg style="left:767px;top:736px" width="26" height="26" viewBox="0 0 26 26"><rect x="1" y="6" width="5" height="13" rx="1" fill="#b9c2c9"/><rect x="5" y="2" width="20" height="16" rx="1.500" fill="#dfe4e8" stroke="#aab3ba" stroke-width=".8"/><rect x="7" y="4" width="16" height="11.500" fill="#eaf5fb"/><path d="M7.500 13l2.500-2 1.500 1.500 2-6 2 7 1.500-4 1.500 3.500 2-2 2 1.500" fill="none" stroke="#2a7fd0" stroke-width="1.200"/><path d="M12 18h6l1 3h-8z" fill="#c3cad0"/><ellipse cx="15" cy="22.500" rx="6" ry="2" fill="#cfd5da"/></svg>
<div class="abs" style="left:123.0px;top:766px;width:40px;height:2px;background:#f47f7f"></div>
<div class="abs" style="left:171.5px;top:766px;width:40px;height:2px;background:#f47f7f"></div>
<div class="abs" style="left:217.5px;top:766px;width:47px;height:2px;background:#f47f7f"></div>
<div class="abs" style="left:270.0px;top:766px;width:40px;height:2px;background:#f47f7f"></div>
<div class="abs" style="left:515.0px;top:766px;width:40px;height:2px;background:#f47f7f"></div>
<div class="abs" style="left:564.0px;top:766px;width:40px;height:2px;background:#f47f7f"></div>
<div class="abs" style="left:711.0px;top:766px;width:40px;height:2px;background:#f47f7f"></div>
<div class="abs" style="left:760.0px;top:766px;width:40px;height:2px;background:#f47f7f"></div>
<svg style="left:1125px;top:737px" width="26" height="24" viewBox="0 0 26 24"><circle cx="11" cy="11.500" r="10.500" fill="#fff"/><circle cx="11" cy="11.500" r="8.800" fill="#1e95d6"/><text x="11" y="17" text-anchor="middle" font-family="Liberation Sans" font-weight="bold" font-size="15" fill="#fff">?</text><circle cx="19.500" cy="17.500" r="4.600" fill="#e81123"/><rect x="18.800" y="14.500" width="1.500" height="4" fill="#fff"/><rect x="18.800" y="19.300" width="1.500" height="1.400" fill="#fff"/></svg>
<svg style="left:1159px;top:744px" width="12" height="7" viewBox="0 0 12 7"><path d="M0.500 6.500l5.500-5.500 5.500 5.500" fill="none" stroke="#fff" stroke-width="1.200"/></svg>
<svg style="left:1181px;top:741px" width="17" height="15" viewBox="0 0 17 15"><path d="M4.500 0.600h12v9.500h-10" fill="none" stroke="#fff" stroke-width="1.100"/><rect x="0.600" y="0.600" width="3.800" height="3.200" fill="none" stroke="#fff" stroke-width="1.100"/><path d="M2.500 4v9.500h6M10.500 10.500v3M7 13.500h6.500" fill="none" stroke="#fff" stroke-width="1.100"/></svg>
<svg style="left:1205px;top:742px" width="17" height="12" viewBox="0 0 17 12"><rect x="5" y="2.600" width="10.500" height="7.800" fill="none" stroke="#fff" stroke-width="1.100"/><rect x="15.500" y="4.800" width="1.300" height="3.400" fill="#fff"/><rect x="6.500" y="4.200" width="6" height="4.600" fill="#fff"/><path d="M2.500 0v2.500M4.500 0v2.500M1.500 2.500h4v2a2 2 0 0 1-4 0zM3.500 6.500v3.500h1.500" fill="none" stroke="#fff" stroke-width="1"/></svg>
<svg style="left:1229px;top:741px" width="17" height="15" viewBox="0 0 17 15"><path d="M0.600 5h3l3.600-3.600v12.200L3.600 10h-3z" fill="none" stroke="#fff" stroke-width="1.100"/><path d="M9.500 5.200a3 3 0 0 1 0 4.600M11.700 3.200a6 6 0 0 1 0 8.600M14 1.200a9 9 0 0 1 0 12.600" fill="none" stroke="#fff" stroke-width="1.100"/></svg>
<div class="t" style="left:1260px;top:733px;font-size:11.4px;color:#fff;letter-spacing:-0.150px">4:29 PM</div>
<div class="t" style="left:1255px;top:750.500px;font-size:11.4px;color:#fff;letter-spacing:0.100px">9/17/2019</div>
<svg style="left:1325px;top:740px" width="16" height="16" viewBox="0 0 16 16"><path d="M0 0h16v12h-5.500L8 15 5.500 12H0z" fill="#fff"/><path d="M3 3.500h10M3 6h10M3 8.500h7" stroke="#3b3b3b" stroke-width="1.100"/></svg>
</body>
</html>
